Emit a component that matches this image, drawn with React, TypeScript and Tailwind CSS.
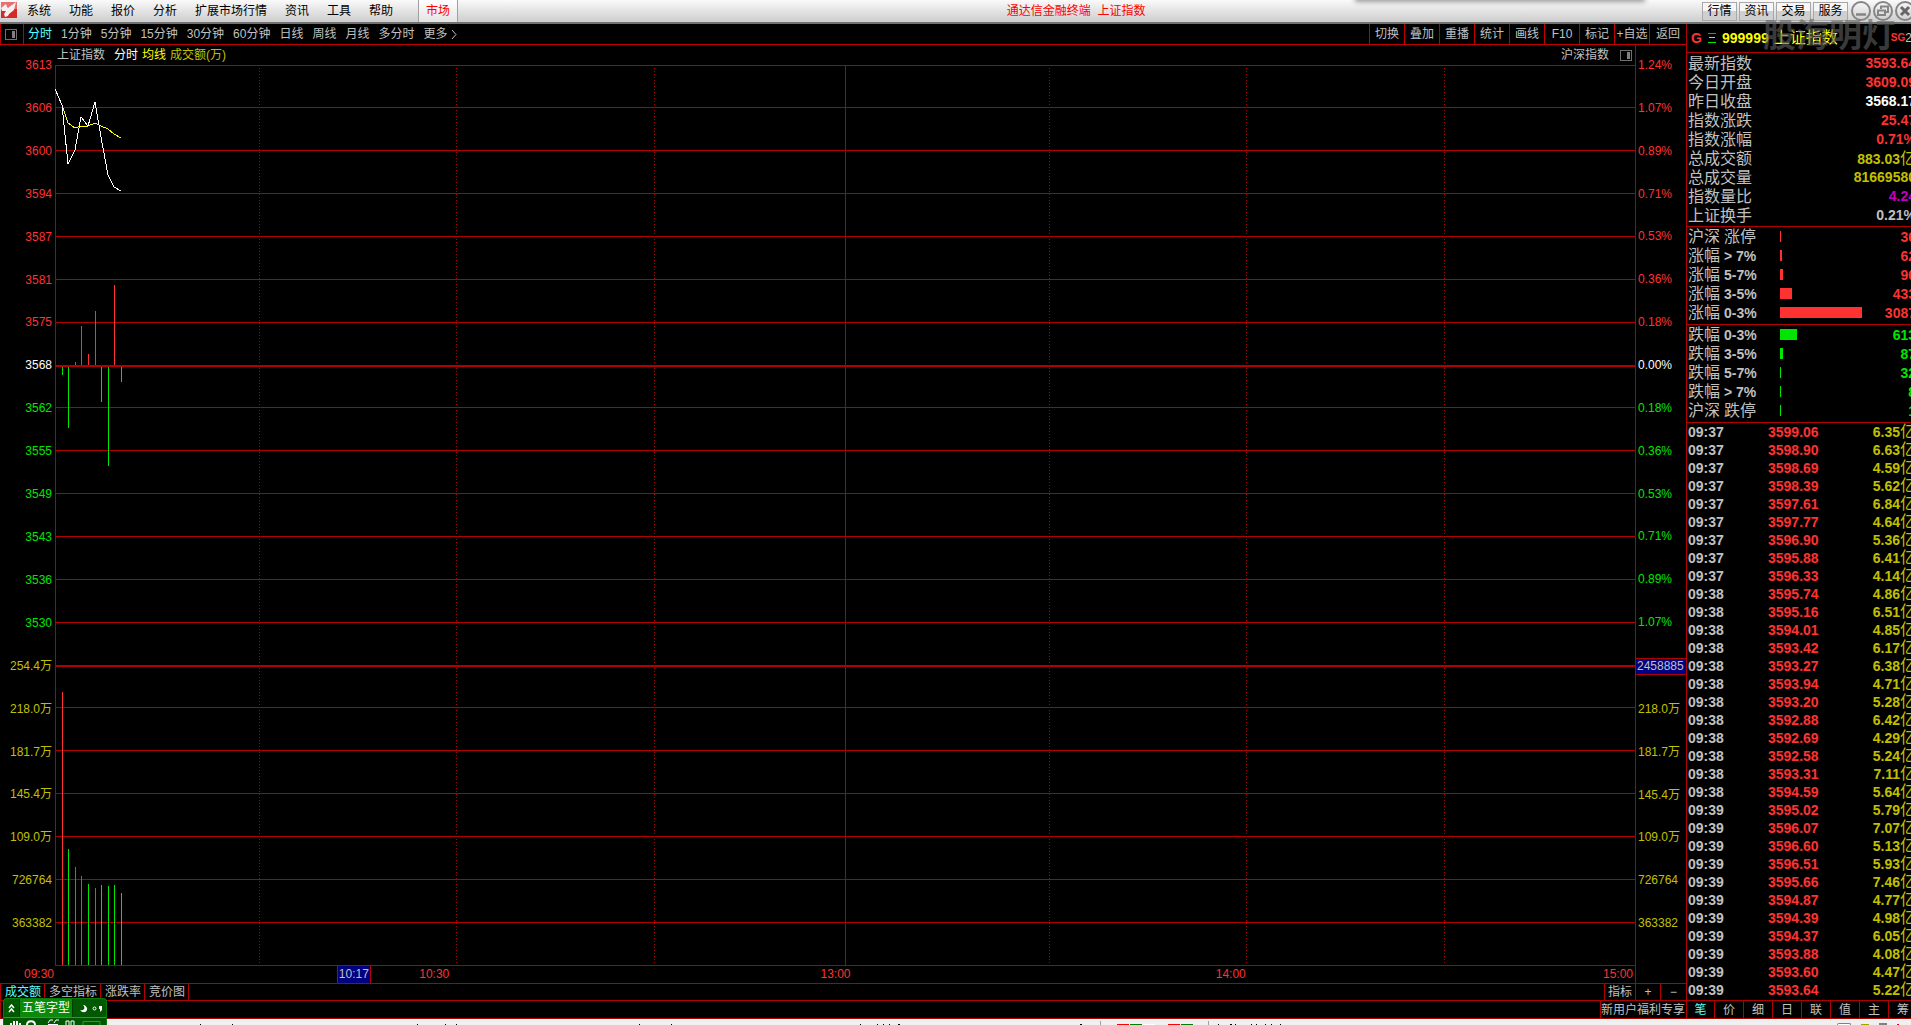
import React from 'react';

const menus = ['系统', '功能', '报价', '分析', '扩展市场行情', '资讯', '工具', '帮助'];
const periods = ['分时', '1分钟', '5分钟', '15分钟', '30分钟', '60分钟', '日线', '周线', '月线', '多分时'];
const tools = ['切换', '叠加', '重播', '统计', '画线', 'F10', '标记', '+自选', '返回'];
const panels = ['行情', '资讯', '交易', '服务'];
const indicators = ['成交额', '多空指标', '涨跌率', '竞价图'];
const sideTabs = ['笔', '价', '细', '日', '联', '值', '主', '筹'];

const prices = ['3613', '3606', '3600', '3594', '3587', '3581', '3575', '3568', '3562', '3555', '3549', '3543', '3536', '3530'];
const percents = ['1.24%', '1.07%', '0.89%', '0.71%', '0.53%', '0.36%', '0.18%', '0.00%', '0.18%', '0.36%', '0.53%', '0.71%', '0.89%', '1.07%'];
const volumes = ['218.0万', '181.7万', '145.4万', '109.0万', '726764', '363382'];

const gridRows = [0, 42, 85, 128, 171, 214, 257, 342, 385, 428, 471, 514, 557, 642, 685, 728, 771, 814, 857, 900];
const gridCols = [204, 401, 599, 994, 1191, 1389];

// one entry per minute: x, momentum bar (top, bottom), volume bar top
const minutes = [
  { x: 7, top: 302, bottom: 310, volume: 627, rising: true },
  { x: 13, top: 302, bottom: 363, volume: 784, rising: false },
  { x: 20, top: 297, bottom: 300, volume: 802, rising: true },
  { x: 26, top: 261, bottom: 300, volume: 811, rising: true },
  { x: 33, top: 289, bottom: 300, volume: 819, rising: false },
  { x: 40, top: 246, bottom: 300, volume: 823, rising: true },
  { x: 46, top: 302, bottom: 337, volume: 820, rising: false },
  { x: 53, top: 302, bottom: 401, volume: 821, rising: false },
  { x: 59, top: 220, bottom: 300, volume: 820, rising: false },
  { x: 66, top: 302, bottom: 317, volume: 828, rising: false },
];

const quotes = [
  { label: '最新指数', value: '3593.64', color: 'text-[#ff3232]' },
  { label: '今日开盘', value: '3609.09', color: 'text-[#ff3232]' },
  { label: '昨日收盘', value: '3568.17', color: 'text-white' },
  { label: '指数涨跌', value: '25.47', color: 'text-[#ff3232]' },
  { label: '指数涨幅', value: '0.71%', color: 'text-[#ff3232]' },
  { label: '总成交额', value: '883.03', unit: '亿', color: 'text-[#c0c000]' },
  { label: '总成交量', value: '81669580', color: 'text-[#c0c000]' },
  { label: '指数量比', value: '4.24', color: 'text-[#c000c0]' },
  { label: '上证换手', value: '0.21%', color: 'text-[#c0c0c0]' },
];

interface Band {
  name: string;
  range: string;
  count: number;
}

const risers: Band[] = [
  { name: '沪深', range: '涨停', count: 36 },
  { name: '涨幅', range: '> 7%', count: 62 },
  { name: '涨幅', range: '5-7%', count: 90 },
  { name: '涨幅', range: '3-5%', count: 433 },
  { name: '涨幅', range: '0-3%', count: 3087 },
];

const fallers: Band[] = [
  { name: '跌幅', range: '0-3%', count: 613 },
  { name: '跌幅', range: '3-5%', count: 87 },
  { name: '跌幅', range: '5-7%', count: 32 },
  { name: '跌幅', range: '> 7%', count: 8 },
  { name: '沪深', range: '跌停', count: 1 },
];

const ticks = [
  ['09:37', '3599.06', '6.35'],
  ['09:37', '3598.90', '6.63'],
  ['09:37', '3598.69', '4.59'],
  ['09:37', '3598.39', '5.62'],
  ['09:37', '3597.61', '6.84'],
  ['09:37', '3597.77', '4.64'],
  ['09:37', '3596.90', '5.36'],
  ['09:37', '3595.88', '6.41'],
  ['09:37', '3596.33', '4.14'],
  ['09:38', '3595.74', '4.86'],
  ['09:38', '3595.16', '6.51'],
  ['09:38', '3594.01', '4.85'],
  ['09:38', '3593.42', '6.17'],
  ['09:38', '3593.27', '6.38'],
  ['09:38', '3593.94', '4.71'],
  ['09:38', '3593.20', '5.28'],
  ['09:38', '3592.88', '6.42'],
  ['09:38', '3592.69', '4.29'],
  ['09:38', '3592.58', '5.24'],
  ['09:38', '3593.31', '7.11'],
  ['09:38', '3594.59', '5.64'],
  ['09:39', '3595.02', '5.79'],
  ['09:39', '3596.07', '7.07'],
  ['09:39', '3596.60', '5.13'],
  ['09:39', '3596.51', '5.93'],
  ['09:39', '3595.66', '7.46'],
  ['09:39', '3594.87', '4.77'],
  ['09:39', '3594.39', '4.98'],
  ['09:39', '3594.37', '6.05'],
  ['09:39', '3593.88', '4.08'],
  ['09:39', '3593.60', '4.47'],
  ['09:39', '3593.64', '5.22'],
];

const axisColor = (index: number) =>
  index < 7 ? 'text-[#ff3232]' : index === 7 ? 'text-white' : index < 14 ? 'text-[#00e600]' : 'text-[#c0c000]';

function PaneIcon() {
  return (
    <svg width="12" height="11" viewBox="0 0 12 11" shapeRendering="crispEdges">
      <rect x="0.5" y="0.5" width="11" height="10" rx="1" fill="none" stroke="#707070" />
      <rect x="7" y="2" width="3" height="7" fill="#808080" />
    </svg>
  );
}

function MenuBar() {
  return (
    <header className="relative flex h-6 shrink-0 items-stretch border-b-2 border-[#707070] bg-linear-to-b from-[#fafafa] to-[#cdcdcd] text-black">
      <div className="absolute -top-3 left-[71%] h-3 w-[15%] bg-white shadow-[0_0_5px_2px_#999]" />
      <svg className="mt-[2px] ml-px shrink-0" width="16" height="16" viewBox="0 0 16 16">
        <rect width="16" height="16" fill="#d42a2a" />
        <path d="M0 0h16v7H0z" fill="#e87070" />
        <path d="M0 6l5-4 1 3 1 1 8-6-2 8-5 4-1 2-3 1-1-3 2-3H1z" fill="#f4f0f0" />
      </svg>
      <nav className="ml-[10px] flex items-center gap-[18px]">
        {menus.map((menu) => (
          <button key={menu}>{menu}</button>
        ))}
      </nav>
      <button className="ml-[25px] w-10 shrink-0 border-x border-[#a0a0a0] bg-linear-to-b from-white to-[#e4e4e4] text-[#ff0000]">
        市场
      </button>
      <h1 className="flex flex-1 items-center justify-center pr-2 whitespace-pre text-[#ff0000]">通达信金融终端  上证指数</h1>
      <div className="flex items-center gap-[2px]">
        {panels.map((panel) => (
          <button
            key={panel}
            className="h-[19px] w-[35px] border border-[#a8a8a8] bg-linear-to-b from-[#f6f6f6] from-50% to-[#cfcfcf] to-50% leading-4"
          >
            {panel}
          </button>
        ))}
      </div>
      <div className="ml-[3px] flex w-[60px] shrink-0 items-center gap-[2px] overflow-hidden">
        <button aria-label="最小化" className="shrink-0">
          <svg width="20" height="20" viewBox="0 0 20 20" fill="none" stroke="#858585">
            <circle cx="10" cy="10" r="9" strokeWidth="2" />
            <path d="M5 13.500h10" strokeWidth="2.500" />
          </svg>
        </button>
        <button aria-label="还原" className="shrink-0">
          <svg width="20" height="20" viewBox="0 0 20 20" fill="none" stroke="#858585">
            <circle cx="10" cy="10" r="9" strokeWidth="2" />
            <path d="M8 8V5.500h7V11h-3M5 9.500h7V14H5z" strokeWidth="2" />
          </svg>
        </button>
        <button aria-label="关闭" className="shrink-0">
          <svg width="20" height="20" viewBox="0 0 20 20" fill="none" stroke="#858585">
            <circle cx="10" cy="10" r="9" strokeWidth="2" />
            <path d="M6 6l8 8M14 6l-8 8" stroke="#666" strokeWidth="3" />
          </svg>
        </button>
      </div>
    </header>
  );
}

function Toolbar() {
  return (
    <div className="flex h-[21px] shrink-0 items-stretch border-b border-l border-[#c00000]">
      <button aria-label="侧栏" className="flex w-[23px] items-center border-r border-[#c00000] pl-1">
        <PaneIcon />
      </button>
      <nav className="ml-1 flex items-center gap-[9px]">
        {periods.map((period, index) => (
          <button key={period} className={index === 0 ? 'text-[#54ffff]' : ''}>
            {period}
          </button>
        ))}
        <button className="flex items-center gap-[3px]">
          更多
          <svg width="6" height="9" viewBox="0 0 6 9" fill="none" stroke="#c0c0c0">
            <path d="M1 0l4 4.500L1 9" />
          </svg>
        </button>
      </nav>
      <div className="ml-auto flex">
        {tools.map((tool) => (
          <button key={tool} className="w-[35px] border-l border-[#c00000] last:w-[37px]">
            {tool}
          </button>
        ))}
      </div>
    </div>
  );
}

function Plot() {
  return (
    <svg
      className="h-full min-w-0 flex-1"
      viewBox="0 0 1581 901"
      preserveAspectRatio="none"
      shapeRendering="crispEdges"
      fill="none"
    >
      <g stroke="#b00000">
        {gridRows.map((y) => (
          <path key={y} d={`M0 ${y + 0.5}H1581`} />
        ))}
        <path d="M0 301H1581M0 601H1581" strokeWidth="2" />
        <path d="M0.500 0V901M790.500 0V901M1580.500 0V901" />
        {gridCols.map((x) => (
          <path key={x} d={`M${x + 0.5} 3V900`} strokeDasharray="1 2" />
        ))}
      </g>
      {minutes.map((minute) => (
        <g key={minute.x}>
          <path
            d={`M${minute.x + 0.5} ${minute.top}V${minute.bottom}`}
            stroke={minute.top > 300 ? '#00e600' : '#ff3232'}
          />
          <path d={`M${minute.x + 0.5} ${minute.volume}V900`} stroke={minute.rising ? '#ff3232' : '#00e600'} />
        </g>
      ))}
      <polyline points="7,40 13,58 20,63 26,61 33,61 40,58 46,61 53,64 59,69 66,73" stroke="#ffff00" />
      <polyline points="0,24 7,40 13,99 20,85 26,52 33,61 40,37 46,72 53,110 59,122 66,126" stroke="#ffffff" />
    </svg>
  );
}

function Chart() {
  return (
    <>
      <div className="flex h-5 shrink-0">
        <div className="flex flex-1 items-center border-r border-[#b00000] pl-[57px]">
          <span>上证指数</span>
          <span className="ml-[9px] text-white">分时</span>
          <span className="ml-1 text-[#ffff00]">均线</span>
          <span className="ml-1 text-[#c0c000]">成交额(万)</span>
          <button className="mr-[11px] ml-auto">沪深指数</button>
          <button aria-label="展开" className="mr-[3px]">
            <PaneIcon />
          </button>
        </div>
        <div className="w-[50px]" />
      </div>
      <div className="flex flex-1 items-stretch">
        <ol className="-mt-2 mb-2 flex w-[55px] flex-col pr-[3px] text-right">
          {[...prices, '254.4万', ...volumes].map((label, index) => (
            <li key={index} className={`flex-1 leading-[17px] ${axisColor(index)}`}>
              {label}
            </li>
          ))}
        </ol>
        <div className="flex min-h-[901px] flex-1">
          <Plot />
        </div>
        <ol className="-mt-2 mb-2 flex w-[50px] flex-col">
          {[...percents, '2458885', ...volumes].map((label, index) =>
            index === 14 ? (
              <li key={index} className="flex-1 pt-px">
                <div className="border-y border-[#b00000] bg-[#000080] pl-px leading-[15px]">{label}</div>
              </li>
            ) : (
              <li key={index} className={`flex-1 pl-[2px] leading-[17px] ${axisColor(index)}`}>
                {label}
              </li>
            ),
          )}
        </ol>
      </div>
      <div className="flex h-[18px] shrink-0 border-b border-[#b00000] text-[#ff3232]">
        <div className="relative grid flex-1 grid-cols-[395fr_401fr_395fr_387fr_32px] items-start border-r border-[#b00000] pl-6 leading-4">
          <span>09:30</span>
          <span>10:30</span>
          <span>13:00</span>
          <span>14:00</span>
          <span>15:00</span>
          <span className="absolute inset-y-0 left-[20.600%] w-[34px] border-x border-[#b00000] bg-[#000080] text-center leading-4 text-[#c0c0c0]">
            10:17
          </span>
        </div>
        <div className="w-[50px]" />
      </div>
      <div className="flex h-[17px] shrink-0 border-b border-l border-[#b00000] leading-4">
        {indicators.map((name, index) => (
          <button
            key={name}
            className={`border-r border-[#b00000] pr-[3px] pl-1 ${index === 0 ? 'text-[#54ffff]' : ''}`}
          >
            {name}
          </button>
        ))}
        <button className="ml-auto w-[31px] border-l border-[#b00000]">指标</button>
        <button className="w-[25px] border-l border-[#b00000]">+</button>
        <button className="w-[26px] border-l border-[#b00000]">−</button>
      </div>
      <div className="flex h-[18px] shrink-0 border-b border-l border-[#b00000] leading-[18px]">
        <a href="#welfare" className="ml-auto border-l border-[#b00000] pr-px">
          新用户福利专享
        </a>
      </div>
    </>
  );
}

function BandList({ bands, bar, text }: { bands: Band[]; bar: string; text: string }) {
  return (
    <ul className="border-b border-[#b00000] pb-[2px]">
      {bands.map((band) => (
        <li key={band.name + band.range} className="flex h-[19px] items-center pr-[5px] pl-px">
          <span className="flex w-[92px] items-center gap-1 text-base leading-[19px]">
            {band.name}
            <span className={band.name === '沪深' ? '' : 'text-sm font-bold'}>{band.range}</span>
          </span>
          <span className={`h-[11px] ${bar}`} style={{ width: Math.ceil((band.count / 3087) * 82) }} />
          <span className={`ml-auto text-sm font-bold ${text}`}>{band.count}</span>
        </li>
      ))}
    </ul>
  );
}

function QuotePanel() {
  return (
    <aside className="flex w-[225px] shrink-0 overflow-hidden border-l border-[#b00000]">
      <div className="flex w-[234px] shrink-0 flex-col">
        <div className="flex h-[29px] shrink-0 items-center border-b border-[#b00000] pl-1">
          <span className="w-[17px] text-sm font-bold text-[#ff3232]">G</span>
          <svg width="8" height="10" viewBox="0 0 8 10" shapeRendering="crispEdges">
            <path d="M0 0.500h8" stroke="#ff3232" />
            <path d="M1 4.500h6" stroke="#c0c0c0" />
            <path d="M0 9.500h8" stroke="#00e600" />
          </svg>
          <span className="ml-[6px] text-sm font-bold text-[#ffff00]">999999</span>
          <span className="ml-[5px] text-base text-[#ffff00]">上证指数</span>
          <span className="ml-auto text-[10px] font-bold text-[#ff3232]">SG</span>
          <span className="mr-[9px] text-xs">2</span>
        </div>
        <dl className="border-b border-[#b00000] pt-px pb-px">
          {quotes.map((quote) => (
            <div key={quote.label} className="flex h-[19px] items-center justify-between pr-[5px] pl-px">
              <dt className="text-base leading-[19px]">{quote.label}</dt>
              <dd className={`text-sm leading-[19px] font-bold ${quote.color}`}>
                {quote.value}
                {quote.unit && <span className="text-base leading-[19px] font-normal">{quote.unit}</span>}
              </dd>
            </div>
          ))}
        </dl>
        <BandList bands={risers} bar="bg-[#ff3232]" text="text-[#ff3232]" />
        <BandList bands={fallers} bar="bg-[#00e600]" text="text-[#00e600]" />
        <div className="flex-1">
          <table className="w-full table-fixed border-collapse text-sm font-bold">
            <tbody>
              {ticks.map(([time, price, amount], index) => (
                <tr key={index} className="h-[18px] leading-[18px]">
                  <td className="w-[81px] p-0 pl-px">{time}</td>
                  <td className="p-0 text-[#ff3232]">{price}</td>
                  <td className="p-0 pr-[5px] text-right text-[#c0c000]">
                    {amount}
                    <span className="text-base leading-[18px] font-normal">亿</span>
                  </td>
                </tr>
              ))}
            </tbody>
          </table>
        </div>
        <div className="flex h-[19px] shrink-0 border-y border-[#b00000]">
          {sideTabs.map((tab, index) => (
            <button
              key={tab}
              className={`w-[29px] shrink-0 border-r border-[#b00000] leading-[18px] first:w-7 ${index === 0 ? 'text-[#54ffff]' : ''}`}
            >
              {tab}
            </button>
          ))}
        </div>
      </div>
    </aside>
  );
}

function InputMethodBar() {
  return (
    <div className="absolute bottom-0 left-[3px] h-[27px] w-[104px] overflow-hidden rounded-t-sm border border-b-0 border-[#0a7a0a] bg-[#005800] text-white">
      <div className="flex h-[19px] items-center border-b border-[#20a040]">
        <svg className="ml-[4px]" width="7" height="9" viewBox="0 0 7 9" fill="none" stroke="#fff">
          <path d="M1 4l2.500-3L6 4M1 8l2.500-3L6 8" strokeWidth="1.500" />
        </svg>
        <button className="ml-1 h-[18px] w-[54px] border-x border-[#003c00] bg-[#0a8a0a] leading-[18px]">五笔字型</button>
        <svg className="ml-[6px]" width="26" height="9" viewBox="0 0 26 9">
          <path d="M4 1c3 3 1 6-3 5 3 4 8 2 7-2-1-2-2-3-4-3z" fill="#fff" />
          <circle cx="15.500" cy="4.500" r="1.500" fill="none" stroke="#fff" />
          <path d="M20 2h3v4l-2 2V5h-1z" fill="#fff" />
        </svg>
      </div>
      <svg className="ml-[6px]" width="92" height="7" viewBox="0 0 92 7" fill="none" stroke="#fff">
        <path d="M1 7V5M4 7V3M7 7V3M10 7V5" strokeWidth="2" />
        <path d="M17 7c0-5 8-5 8 0" strokeWidth="2" />
        <path d="M38 5l2-3h3M44 5l2-3h3M38 6.500h10M56 7V3h3v4M61 7V3h3v4" />
        <path d="M73 7V3.500h17V7" stroke="#20a040" />
      </svg>
    </div>
  );
}

function StatusStrip() {
  return (
    <footer className="flex h-[6px] shrink-0 items-end overflow-hidden border-t border-white bg-[#f0f0f0]">
      <svg className="min-w-0 flex-1" height="1" viewBox="0 0 1100 1" preserveAspectRatio="none" shapeRendering="crispEdges">
        <path
          d="M200 .5h1M232 .5h1M417 .5h1M445 .5h1M456 .5h1M639 .5h1M671 .5h1M860 .5h1M877 .5h1M883 .5h1M889 .5h1M898 .5h2M1080 .5h2"
          stroke="#000"
        />
      </svg>
      <div className="flex h-1 w-[109px] shrink-0 items-end justify-center gap-px border-x border-[#a0a0a0]">
        <span className="h-px w-3 bg-[#ff0000]" />
        <span className="h-px w-3 bg-[#008000]" />
        <span className="mr-3 h-px w-3 bg-white" />
        <span className="h-px w-3 bg-[#ff0000]" />
        <span className="h-px w-3 bg-[#008000]" />
      </div>
      <svg className="ml-2 shrink-0" width="80" height="1" viewBox="0 0 80 1" shapeRendering="crispEdges">
        <path d="M1 .5h1M13 .5h2M18 .5h1M34 .5h1M39 .5h1M48 .5h1M54 .5h1M63 .5h1" stroke="#000" />
      </svg>
      <div className="flex w-[614px] shrink-0 items-end justify-end gap-[10px] pr-3">
        <span className="h-[2px] w-[14px] rounded-t-sm border border-b-0 border-[#808080] bg-white" />
        <span className="h-px w-2 bg-[#a0a000]" />
        <span className="h-[2px] w-2 bg-[#808080]" />
        <span className="h-px w-[2px] bg-[#ff0000]" />
      </div>
    </footer>
  );
}

export default function App() {
  return (
    <div className="relative flex min-h-screen flex-col overflow-hidden bg-black font-['Liberation_Sans','Noto_Sans_CJK_SC',sans-serif] text-xs whitespace-nowrap text-[#c0c0c0]">
      <MenuBar />
      <div className="flex flex-1">
        <main className="flex min-w-0 flex-1 flex-col">
          <Toolbar />
          <Chart />
        </main>
        <QuotePanel />
      </div>
      <StatusStrip />
      <span className="pointer-events-none absolute top-4 right-4 text-[33px] leading-10 font-bold text-[#606060]/60">
        股海明灯
      </span>
      <InputMethodBar />
    </div>
  );
}
